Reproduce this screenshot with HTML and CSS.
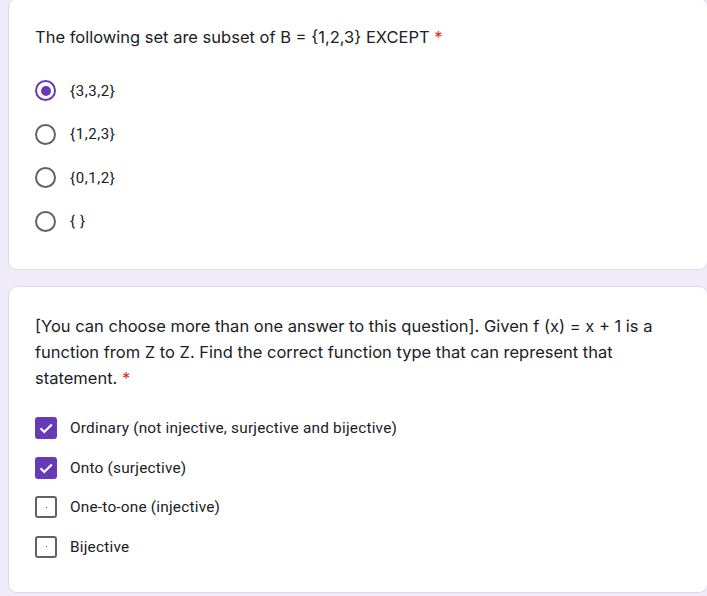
FILE: index.html
```html
<!DOCTYPE html>
<html>
<head>
<meta charset="utf-8">
<link rel="stylesheet" href="styles.css">
</head>
<body>
<div class="page">
  <section class="card card-first">
    <div class="title">The following set are subset of B = {1,2,3} EXCEPT <span class="req">*</span></div>
    <div class="options radios">
      <div class="opt"><span class="radio checked"></span><span class="label small">{3,3,2}</span></div>
      <div class="opt"><span class="radio"></span><span class="label small">{1,2,3}</span></div>
      <div class="opt"><span class="radio"></span><span class="label small">{0,1,2}</span></div>
      <div class="opt"><span class="radio"></span><span class="label small">{ }</span></div>
    </div>
  </section>
  <section class="card card-second">
    <div class="title">[You can choose more than one answer to this question]. Given f (x) = x + 1 is a function from Z to Z. Find the correct function type that can represent that statement. <span class="req">*</span></div>
    <div class="options checks">
      <div class="opt"><span class="box checked"><svg viewBox="0 0 22 22" width="22" height="22"><path d="M5.5 11.2 L9.3 15 L16.8 7.5" fill="none" stroke="#fff" stroke-width="2.2"/></svg></span><span class="label">Ordinary (not injective, surjective and bijective)</span></div>
      <div class="opt"><span class="box checked"><svg viewBox="0 0 22 22" width="22" height="22"><path d="M5.5 11.2 L9.3 15 L16.8 7.5" fill="none" stroke="#fff" stroke-width="2.2"/></svg></span><span class="label">Onto (surjective)</span></div>
      <div class="opt"><span class="box"></span><span class="label">One-to-one (injective)</span></div>
      <div class="opt"><span class="box"></span><span class="label">Bijective</span></div>
    </div>
  </section>
</div>
</body>
</html>
```
FILE: styles.css
```css
html, body {
  margin: 0;
  padding: 0;
  background: #f0ebf8;
}
.page {
  padding: 0 0 0 8px;
  display: flex;
  flex-direction: column;
  gap: 16px;
}
.card {
  background: #fff;
  border: 1px solid #dadce0;
  border-radius: 9px;
  padding: 0 26px;
  box-sizing: border-box;
  width: 700px;
}
.card-first {
  margin-top: -2px;
  height: 272px;
  padding-top: 25px;
}
.card-second {
  height: 307px;
  padding-top: 26px;
}
.title {
  font-family: "Inter", "Open Sans", sans-serif;
  font-size: 16.5px;
  line-height: 26px;
  color: #202124;
  letter-spacing: 0;
}
.req {
  color: #d93025;
}
.options {
  display: flex;
  flex-direction: column;
}
.radios {
  margin-top: 19px;
}
.checks {
  margin-top: 17px;
}
.opt {
  display: flex;
  align-items: center;
  font-family: "Roboto", sans-serif;
  color: #202124;
}
.radios .opt { height: 43.5px; }
.checks .opt { height: 39.7px; }
.label {
  font-size: 15.4px;
  letter-spacing: 0.2px;
  margin-left: 13px;
}
.label.small {
  font-size: 15px;
  letter-spacing: 0.6px;
  margin-left: 14px;
}
.radio {
  width: 21px;
  height: 21px;
  box-sizing: border-box;
  border: 2.5px solid #5f6368;
  border-radius: 50%;
  display: flex;
  align-items: center;
  justify-content: center;
}
.radio.checked {
  border-color: #673ab7;
}
.radio.checked::after {
  content: "";
  width: 10px;
  height: 10px;
  border-radius: 50%;
  background: #673ab7;
}
.box {
  width: 22px;
  height: 22px;
  box-sizing: border-box;
  border: 2px solid #5f6368;
  border-radius: 3px;
  display: flex;
  align-items: center;
  justify-content: center;
}
.box::after {
  content: "";
  width: 1px;
  height: 1px;
  background: #5f6368;
}
.box.checked {
  border: none;
  background: #673ab7;
}
.box.checked::after { display: none; }
.box svg { display: block; }
```
